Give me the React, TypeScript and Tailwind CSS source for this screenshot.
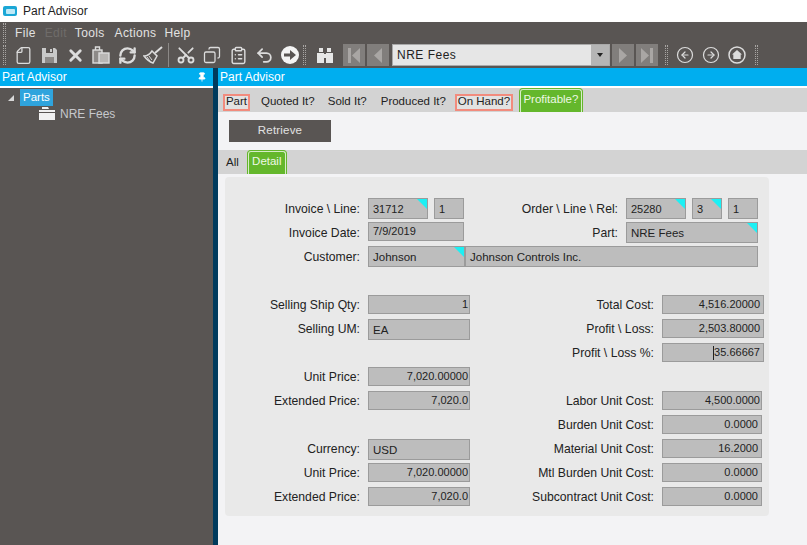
import { ReactNode } from 'react'
import { CircleArrowLeft, CircleArrowRight, ClipboardList, Copy, File, Pin, RefreshCw, Scissors, Undo2, X } from 'lucide-react'

const arial = { fontFamily: '"Liberation Sans", Arial, sans-serif' }

function Grip() {
  return <div className="w-[3px] h-[20px] border-x border-dotted border-[#a8a5a3]" />
}

function ToolIcon({ children }: { children: ReactNode }) {
  return <div className="w-[26px] h-full flex items-center justify-center text-[#dcdcdc] shrink-0">{children}</div>
}

function NavButton({ children }: { children: ReactNode }) {
  return <div className="w-[22px] h-[22px] bg-[#817e7c] flex items-center justify-center shrink-0">{children}</div>
}

function Toolbar() {
  return (
    <div className="h-[24px] bg-[#595553] flex items-center pl-[3px] pb-[2px] shrink-0">
      <Grip />
      <div className="ml-[4px] flex h-full">
        <ToolIcon><File size={19} className="-scale-x-100" strokeWidth={1.6} /></ToolIcon>
        <ToolIcon>
          <svg width="17" height="17" viewBox="0 0 17 17">
            <path d="M1 1h13l2 2v13H1z" fill="#c9c9c9" />
            <path d="M5 1h7v5H5z" fill="#595553" />
            <path d="M9 2h2v3H9z" fill="#c9c9c9" />
            <path d="M4 10h9v6H4z" fill="#8d8a88" />
          </svg>
        </ToolIcon>
        <ToolIcon><X size={19} strokeWidth={3.6} /></ToolIcon>
        <ToolIcon>
          <svg width="18" height="20" viewBox="0 0 18 20" fill="none" stroke="currentColor" strokeWidth="1.4">
            <rect x="1" y="5" width="9" height="13" fill="#8d8a88" />
            <rect x="7" y="8" width="10" height="10" fill="#b8b6b4" />
            <path d="M3.500 5V2h4v3" />
          </svg>
        </ToolIcon>
        <ToolIcon><RefreshCw size={19} strokeWidth={3} /></ToolIcon>
        <ToolIcon>
          <svg width="20" height="20" viewBox="0 0 20 20" fill="none" stroke="currentColor" strokeWidth="1.5">
            <path d="M19 2l-7 6" strokeWidth="2" />
            <path d="M9 6l5 5-4 7c-3-1-6-3-9-7 3 0 6-2 8-5z" />
            <path d="M6 11l3 4M4 12l3 4" strokeWidth="1" />
          </svg>
        </ToolIcon>
      </div>
      <div className="w-px h-[24px] bg-[#8c8987] mx-[2px]" />
      <div className="flex h-full ml-[2px]">
        <ToolIcon><Scissors size={20} strokeWidth={2.2} className="-rotate-90" /></ToolIcon>
        <ToolIcon><Copy size={18} strokeWidth={1.7} className="-scale-x-100" /></ToolIcon>
        <ToolIcon><ClipboardList size={19} strokeWidth={1.8} /></ToolIcon>
        <ToolIcon><Undo2 size={19} strokeWidth={2.2} /></ToolIcon>
        <ToolIcon>
          <svg width="20" height="20" viewBox="0 0 20 20">
            <circle cx="10" cy="10" r="9" fill="#f4f4f4" />
            <path d="M4 8.400h6V5l6 5-6 5v-3.400H4z" fill="#595553" />
          </svg>
        </ToolIcon>
      </div>
      <Grip />
      <div className="ml-[6px] w-[26px] flex justify-center text-[#e6e6e6]">
        <svg width="18" height="17" viewBox="0 0 18 17" fill="currentColor">
          <rect x="3" y="1" width="4" height="4" />
          <rect x="11" y="1" width="4" height="4" />
          <rect x="1" y="6" width="7" height="10" />
          <rect x="10" y="6" width="7" height="10" />
          <rect x="7" y="7" width="4" height="4" />
        </svg>
      </div>
      <div className="flex gap-[2px] ml-[5px]">
        <NavButton>
          <svg width="14" height="15" viewBox="0 0 14 15" fill="#a9a6a4"><rect x="1" y="0" width="3" height="15" /><path d="M13 0v15L5 7.500z" /></svg>
        </NavButton>
        <NavButton>
          <svg width="10" height="15" viewBox="0 0 10 15" fill="#a9a6a4"><path d="M9 0v15L1 7.500z" /></svg>
        </NavButton>
      </div>
      <div className="ml-[3px] w-[218px] h-[22px] bg-[#e6e6e6] border border-[#a9a9a9] flex items-center shrink-0">
        <span className="flex-1 pl-[4px] text-[12px] tracking-[0.5px] text-[#222]">NRE Fees</span>
        <div className="w-[18px] h-full bg-[#b5b5b5] flex items-center justify-center">
          <div className="w-0 h-0 border-x-[3px] border-x-transparent border-t-[4px] border-t-[#222]" />
        </div>
      </div>
      <div className="flex gap-[2px] ml-[2px]">
        <NavButton>
          <svg width="10" height="15" viewBox="0 0 10 15" fill="#a9a6a4"><path d="M1 0v15l8-7.500z" /></svg>
        </NavButton>
        <NavButton>
          <svg width="14" height="15" viewBox="0 0 14 15" fill="#a9a6a4"><path d="M1 0v15l8-7.500z" /><rect x="10" y="0" width="3" height="15" /></svg>
        </NavButton>
      </div>
      <div className="ml-[7px]"><Grip /></div>
      <div className="flex h-full ml-[4px] text-[#dcdcdc]">
        <ToolIcon><CircleArrowLeft size={18} strokeWidth={1.6} /></ToolIcon>
        <ToolIcon><CircleArrowRight size={18} strokeWidth={1.6} /></ToolIcon>
        <ToolIcon>
          <svg width="18" height="18" viewBox="0 0 18 18" fill="none">
            <circle cx="9" cy="9" r="8" stroke="currentColor" strokeWidth="1.500" />
            <path d="M9 4l5 4.500h-1.300V13H5.300V8.500H4z" fill="currentColor" />
          </svg>
        </ToolIcon>
      </div>
      <div className="ml-[5px]"><Grip /></div>
    </div>
  )
}

function Corner() {
  return <div className="absolute top-0 right-0 w-[10px] h-[10px] bg-[#1cf0f4] [clip-path:polygon(0_0,100%_0,100%_100%)]" />
}

function Field({ children, w, tall = false, right = false, corner = false, small = false, tight = false }: {
  children?: ReactNode
  w: string
  tall?: boolean
  right?: boolean
  corner?: boolean
  small?: boolean
  tight?: boolean
}) {
  return (
    <div
      className={`relative ${w} ${tall ? 'h-[21px] pt-[2px]' : 'h-[19px]'} ${small || right ? 'text-[11px]' : 'text-[11.5px]'} bg-[#bdbdbd] border border-[#9b9b9b] text-[#222] flex items-center whitespace-nowrap overflow-hidden shrink-0 ${right ? (tight ? 'justify-end pr-[1px]' : 'justify-end pr-[3px]') : 'pl-[4px]'}`}
    >
      {children}
      {corner && <Corner />}
    </div>
  )
}

function Label({ children, className = '' }: { children: ReactNode; className?: string }) {
  return <div className={`text-[12.2px] leading-[18px] text-right text-[#222] whitespace-nowrap ${className}`}>{children}</div>
}

function LowerRow({ left, leftValue, textLeft = false, right, rightValue, rightW = 'w-[100px]', caret = false, tight = false }: {
  left?: string
  leftValue?: string
  textLeft?: boolean
  right?: string
  rightValue?: string
  rightW?: string
  caret?: boolean
  tight?: boolean
}) {
  return (
    <div className="h-[24px] flex items-start">
      <Label className="w-[135px] pt-[1px]">{left}</Label>
      <div className="w-[102px] ml-[8px] shrink-0">
        {left && <Field w="w-[102px]" tall={textLeft} right={!textLeft} tight>{leftValue}</Field>}
      </div>
      <Label className="flex-1 pt-[1px]">{right}</Label>
      <div className="w-[102px] ml-[8px] mr-[5px] shrink-0">
        {right && (
          <Field w={rightW} right tight={tight}>
            {caret && <span className="w-px h-[14px] bg-[#222]" />}
            {rightValue}
          </Field>
        )}
      </div>
    </div>
  )
}

function DetailPanel() {
  return (
    <div className="ml-[7px] mt-[3px] w-[544px] h-[339px] bg-[#e9e9e9] rounded-[4px] pt-[21px]">
      <div className="h-[24px] flex items-start">
        <Label className="w-[135px] pt-[2px]">Invoice \ Line:</Label>
        <div className="ml-[8px] flex gap-[6px]">
          <Field w="w-[60px]" tall small corner>31712</Field>
          <Field w="w-[30px]" tall small>1</Field>
        </div>
        <Label className="flex-1 pt-[2px]">Order \ Line \ Rel:</Label>
        <div className="ml-[8px] mr-[11px] flex gap-[6px]">
          <Field w="w-[60px]" tall small corner>25280</Field>
          <Field w="w-[30px]" tall small corner>3</Field>
          <Field w="w-[30px]" tall small>1</Field>
        </div>
      </div>
      <div className="h-[24px] flex items-start">
        <Label className="w-[135px] pt-[2px]">Invoice Date:</Label>
        <div className="ml-[8px]"><Field w="w-[96px]" small>7/9/2019</Field></div>
        <Label className="flex-1 pt-[2px]">Part:</Label>
        <div className="ml-[8px] mr-[11px]"><Field w="w-[132px]" tall corner>NRE Fees</Field></div>
      </div>
      <div className="h-[49px] flex items-start">
        <Label className="w-[135px] pt-[2px]">Customer:</Label>
        <div className="ml-[8px] flex">
          <Field w="w-[97px]" tall corner>Johnson</Field>
          <Field w="w-[293px]" tall>Johnson Controls Inc.</Field>
        </div>
      </div>
      <LowerRow left="Selling Ship Qty:" leftValue="1" right="Total Cost:" rightValue="4,516.20000" rightW="w-[102px]" />
      <LowerRow left="Selling UM:" leftValue="EA" textLeft right="Profit \ Loss:" rightValue="2,503.80000" rightW="w-[102px]" />
      <LowerRow right="Profit \ Loss %:" rightValue="35.66667" rightW="w-[102px]" caret />
      <LowerRow left="Unit Price:" leftValue="7,020.00000" />
      <LowerRow left="Extended Price:" leftValue="7,020.0" right="Labor Unit Cost:" rightValue="4,500.0000" tight />
      <LowerRow right="Burden Unit Cost:" rightValue="0.0000" />
      <LowerRow left="Currency:" leftValue="USD" textLeft right="Material Unit Cost:" rightValue="16.2000" />
      <LowerRow left="Unit Price:" leftValue="7,020.00000" right="Mtl Burden Unit Cost:" rightValue="0.0000" />
      <LowerRow left="Extended Price:" leftValue="7,020.0" right="Subcontract Unit Cost:" rightValue="0.0000" />
    </div>
  )
}

function GreenTab({ children, className = '' }: { children: ReactNode; className?: string }) {
  return (
    <div className={`h-[24px] rounded-t-[4px] border border-b-0 border-[#64b72c] bg-[#64b72c] text-[11.5px] text-[#eef7e6] whitespace-nowrap shrink-0 ${className}`}>
      <div className="h-full rounded-t-[3px] border border-b-0 border-[#d7ecc8] flex items-center justify-center pb-[3px]">{children}</div>
    </div>
  )
}

function Highlighted({ children, className = '' }: { children: ReactNode; className?: string }) {
  return <div className={`h-[17px] border-2 border-[#f28b7d] flex items-center justify-center bg-[#e2e2e2] whitespace-nowrap shrink-0 ${className}`}>{children}</div>
}

export default function App() {
  return (
    <div className="w-[807px] h-[545px] overflow-hidden bg-white flex flex-col" style={arial}>
      <div className="h-[22px] flex items-center pl-[3px] shrink-0">
        <div className="w-[14px] h-[10px] rounded-[2px] bg-[#1ba7d6] flex items-center justify-center">
          <div className="w-[9px] h-[5px] rounded-[1px] bg-[#bfe9f7]" />
        </div>
        <span className="ml-[6px] text-[12px] text-[#222]">Part Advisor</span>
      </div>

      <div className="h-[22px] bg-[#595553] flex items-center pl-[3px] shrink-0 text-[12px] tracking-[0.35px] text-[#e2e2e2]">
        <Grip />
        <span className="ml-[9px]">File</span>
        <span className="ml-[9px] text-[#6f6c6a]">Edit</span>
        <span className="ml-[8px]">Tools</span>
        <span className="ml-[10px]">Actions</span>
        <span className="ml-[8px]">Help</span>
      </div>

      <Toolbar />

      <div className="flex-1 flex min-h-0">
        <div className="w-[213px] flex flex-col shrink-0 bg-[#595553]">
          <div className="h-[18px] bg-[#00aeef] flex items-center justify-between pl-[2px] pr-[6px] text-[12px] text-white shrink-0">
            <span>Part Advisor</span>
            <Pin size={10} fill="white" strokeWidth={2} />
          </div>
          <div className="h-[2px] bg-white shrink-0" />
          <div className="pl-[8px] pt-[1px] text-[11.5px]">
            <div className="flex items-center h-[17px]">
              <div className="w-0 h-0 border-l-[6px] border-l-transparent border-b-[6px] border-b-[#d8d8d8]" />
              <span className="ml-[6px] h-[17px] px-[3px] flex items-center bg-[#2fa4dd] text-white">Parts</span>
            </div>
            <div className="flex items-center h-[15px] ml-[31px] text-[#c6c8cc] text-[12px]">
              <svg width="16" height="13" viewBox="0 0 16 13" fill="#f1f1f1">
                <path d="M3 0h6l1 2H3zM0 3h16v2H0zM0 6h16v7H0z" />
              </svg>
              <span className="ml-[5px]">NRE Fees</span>
            </div>
          </div>
        </div>

        <div className="w-[5px] bg-[#003a5c] shrink-0" />

        <div className="flex-1 flex flex-col bg-[#f3f3f5] min-w-0">
          <div className="h-[18px] bg-[#00aeef] flex items-center pl-[2px] text-[12px] text-white shrink-0">Part Advisor</div>
          <div className="h-[2px] bg-white shrink-0" />
          <div className="h-[24px] bg-[#d3d3d3] flex items-end text-[11.5px] text-[#222] shrink-0">
            <div className="flex items-center h-[24px] pl-[5px] pt-[4px]">
              <Highlighted className="w-[27px]">Part</Highlighted>
              <span className="ml-[11px]">Quoted It?</span>
              <span className="ml-[13px]">Sold It?</span>
              <span className="ml-[14px]">Produced It?</span>
              <Highlighted className="ml-[9px] w-[58px]">On Hand?</Highlighted>
            </div>
            <GreenTab className="ml-[6px] w-[64px]">Profitable?</GreenTab>
          </div>
          <div className="h-[38px] flex items-center pl-[11px] shrink-0">
            <div className="w-[102px] h-[22px] bg-[#595553] text-[11.5px] text-[#e2e2e2] flex items-center justify-center tracking-[0.2px]">Retrieve</div>
          </div>
          <div className="h-[24px] bg-[#d3d3d3] flex items-end text-[11.5px] text-[#222] shrink-0">
            <span className="ml-[8px] mb-[3px]">All</span>
            <GreenTab className="ml-[8px] w-[40px]">Detail</GreenTab>
          </div>
          <DetailPanel />
        </div>
      </div>
    </div>
  )
}
